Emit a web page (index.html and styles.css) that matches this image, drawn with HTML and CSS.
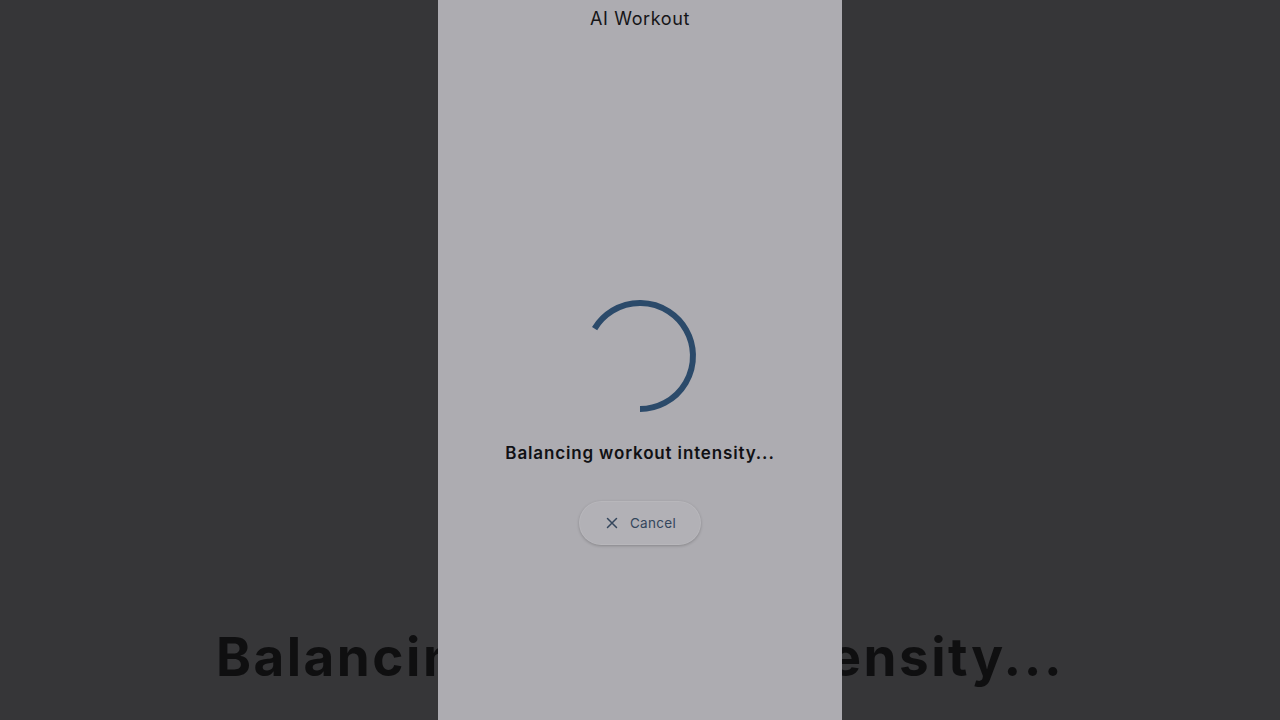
FILE: index.html
```html
<!DOCTYPE html>
<html lang="en">
<head>
<meta charset="utf-8">
<title>AI Workout</title>
<link rel="stylesheet" href="styles.css">
</head>
<body>
<div class="backdrop">
  <div class="backdrop-caption">Balancing workout intensity...</div>
</div>
<main class="phone">
  <header class="title">AI Workout</header>
  <section class="loader">
    <svg class="spinner" width="116" height="116" viewBox="0 0 116 116" aria-hidden="true">
      <path d="M58 111 A53 53 0 1 0 12.6 30.6" fill="none" stroke="#2b4a6a" stroke-width="6"/>
    </svg>
    <p class="status">Balancing workout intensity...</p>
    <button class="cancel" type="button">
      <svg width="12" height="12" viewBox="0 0 12 12" aria-hidden="true"><path d="M1.5 1.5 L10.5 10.5 M10.5 1.5 L1.5 10.5" stroke="#34465c" stroke-width="1.5" stroke-linecap="round"/></svg>
      <span>Cancel</span>
    </button>
  </section>
</main>
</body>
</html>
```

FILE: styles.css
```css
* { box-sizing: border-box; }
html, body { margin: 0; height: 100%; }
body {
  background: #363638;
  font-family: Inter, "Noto Sans", sans-serif;
  overflow: hidden;
  position: relative;
}
.backdrop {
  position: absolute;
  inset: 0;
  display: flex;
  flex-direction: column;
  justify-content: flex-end;
  align-items: center;
  padding-bottom: 31px;
}
.backdrop-caption {
  font-size: 53px;
  font-weight: 700;
  color: #0f0f10;
  letter-spacing: 2.5px;
  white-space: nowrap;
}
.phone {
  position: relative;
  width: 404px;
  height: 720px;
  margin: 0 auto;
  background: #adacb1;
  display: flex;
  flex-direction: column;
  align-items: center;
}
.title {
  margin-top: 8px;
  font-size: 18px;
  color: #151518;
  letter-spacing: 0.6px;
}
.loader {
  margin-top: 269px;
  display: flex;
  flex-direction: column;
  align-items: center;
}
.spinner { display: block; }
.status {
  margin: 29px 0 0;
  font-size: 17px;
  font-weight: 600;
  color: #111114;
  letter-spacing: 0.85px;
}
.cancel {
  margin-top: 38px;
  width: 122px;
  height: 44px;
  border: none;
  border-radius: 22px;
  background: #b2b1b6;
  box-shadow: 0 1px 3px rgba(0,0,0,0.22), 0 0 0 1px rgba(255,255,255,0.08) inset;
  display: flex;
  align-items: center;
  justify-content: center;
  gap: 12px;
  font-family: inherit;
  font-size: 13.5px;
  color: #34465c;
  letter-spacing: 0.3px;
  padding: 0 0 0 2px;
}
.cancel svg { display: block; }
```
